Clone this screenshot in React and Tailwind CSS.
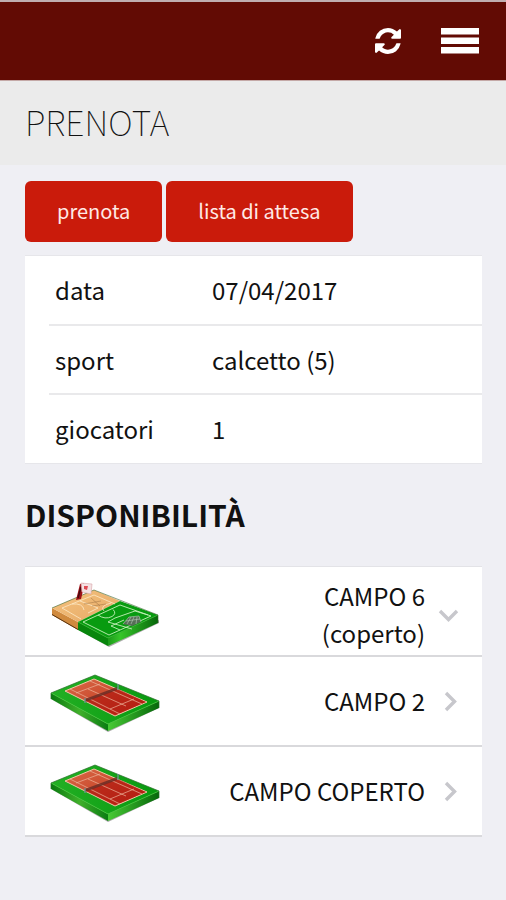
import { useState } from 'react'

const details = [
  { label: 'data', value: '07/04/2017' },
  { label: 'sport', value: 'calcetto (5)' },
  { label: 'giocatori', value: '1' }
]

const fields = [
  { id: 'campo-6', lines: ['CAMPO 6', '(coperto)'], type: 'indoor' },
  { id: 'campo-2', lines: ['CAMPO 2'], type: 'tennis' },
  { id: 'campo-coperto', lines: ['CAMPO COPERTO'], type: 'tennis' }
]

const RefreshIcon = () => (
  <svg className="h-[26px] w-[26px]" viewBox="0 128 1536 1536" fill="#fff" aria-hidden="true">
    <path d="M1511 1056q0 5-1 7-64 268-268 434.500T764 1664q-146 0-282.500-55T238 1452l-129 129q-19 19-45 19t-45-19-19-45v-448q0-26 19-45t45-19h448q26 0 45 19t19 45-19 45l-137 137q71 66 161 102t187 36q134 0 250-65t186-179q11-17 53-117 8-23 30-23h192q13 0 22.500 9.500t9.500 22.500z" />
    <path d="M1536 256v448q0 26-19 45t-45 19h-448q-26 0-45-19t-19-45 19-45l138-138Q969 384 768 384q-134 0-250 65T332 628q-11 17-53 117-8 23-30 23H50q-13 0-22.500-9.500T18 736v-7q65-268 270-434.500T768 128q146 0 284 55.500T1297 340l130-129q19-19 45-19t45 19 19 45z" />
  </svg>
)

const MenuIcon = () => (
  <svg className="h-7 w-10" viewBox="0 0 40 28" fill="#fff" aria-hidden="true">
    <rect x="1" y="1" width="38" height="6.5" />
    <rect x="1" y="10.5" width="38" height="6.5" />
    <rect x="1" y="20" width="38" height="6.5" />
  </svg>
)

const Chevron = ({ open }) => (
  <svg className="h-6 w-6 shrink-0" viewBox="0 0 24 24" fill="none" stroke="#c7c7cc" strokeWidth="3.4" aria-hidden="true">
    {open ? <path d="M2 12l8.500 8.500L19 12" /> : <path d="M8 4l8.500 8.500L8 21" />}
  </svg>
)

const IndoorField = () => (
  <svg className="h-20 w-30 shrink-0" viewBox="5 0 120 80" fill="none" aria-hidden="true">
    <defs>
      <linearGradient id="wood" x1="0" y1="0" x2="1" y2="1">
        <stop offset="0" stopColor="#f5c27e" />
        <stop offset="1" stopColor="#e5a966" />
      </linearGradient>
      <linearGradient id="grass-side" x1="0" y1="0" x2="1" y2="0">
        <stop offset="0" stopColor="#1c9a1a" />
        <stop offset="0.25" stopColor="#36c52a" />
        <stop offset="1" stopColor="#07670a" />
      </linearGradient>
    </defs>
    <path d="M12 44l57 32 50-24v-3L69 72z" fill="#555" opacity="0.5" />
    <path d="M12 37l26 14v8L12 44z" fill="#d08a3e" />
    <path d="M12 43.500l26 15" stroke="#59330f" />
    <path d="M38 51l30 16v8L38 59z" fill="#08860c" />
    <path d="M68 67l50-23v8L68 75z" fill="url(#grass-side)" />
    <path d="M12 37l42-18 26 11-42 21z" fill="url(#wood)" />
    <path d="M80 30l38 14-50 23-30-16z" fill="#089b10" />
    <path d="M38 51l30 16 50-23" stroke="#2fae2a" strokeWidth="0.8" />
    <path d="M12 37l42-18 64 25v8" stroke="#39652d" strokeWidth="0.6" />
    <g stroke="#fff0d2" strokeWidth="0.7">
      <path d="M41 48L22 37l32-13 21 9" />
      <path d="M32 33q11-1 12 6M40 30l18 7-10 5M64 40q-5-5 7-8" />
    </g>
    <path d="M44 33l17-3M51 27l9 8M52 35l14-2" stroke="#8d6136" strokeWidth="0.8" opacity="0.5" />
    <g stroke="#c5efb9" strokeWidth="0.900">
      <path d="M43 51l26 13 42-19-31-11z" />
      <path d="M58 44q7 5 14 1.500 5-3 1-7" />
      <path d="M92 58l-24-7 7-4 20-7 13 4M80 59l-9-4 13-6" />
    </g>
    <path d="M83 53l6-7 10-1 2 6-9 4z" fill="#576e57" />
    <path d="M83 53l6-7 10-1 2 6M87 53l4-7m0 7l3-7m2 7l1-7M86 50l14-2" stroke="#b9cdb9" strokeWidth="0.6" />
    <path d="M36 29l4-16 4-1v4l-3 12z" fill="#9e1017" />
    <path d="M38 27l3-11" stroke="#480a10" strokeWidth="1.500" />
    <path d="M41 12l11 1-1 10-9-2z" fill="#f4e1e3" stroke="#d9a5a8" strokeWidth="0.6" />
    <path d="M44 15l4 0-1 4-3-1z" fill="#df4c54" />
  </svg>
)

const TennisField = () => (
  <svg className="h-20 w-30 shrink-0" viewBox="5 1 120 80" fill="none" aria-hidden="true">
    <defs>
      <linearGradient id="turf" x1="0" y1="0" x2="1" y2="0">
        <stop offset="0" stopColor="#23b024" />
        <stop offset="1" stopColor="#07980f" />
      </linearGradient>
      <linearGradient id="turf-side" x1="0" y1="0" x2="1" y2="0">
        <stop offset="0" stopColor="#48ca35" />
        <stop offset="1" stopColor="#06680a" />
      </linearGradient>
      <linearGradient id="turf-front" x1="0" y1="0" x2="1" y2="0">
        <stop offset="0" stopColor="#0a7a10" />
        <stop offset="0.5" stopColor="#3fb02a" />
        <stop offset="1" stopColor="#0a7c12" />
      </linearGradient>
      <linearGradient id="clay" x1="0" y1="0" x2="1" y2="1">
        <stop offset="0" stopColor="#d96a48" />
        <stop offset="0.5" stopColor="#cb4a2d" />
        <stop offset="1" stopColor="#c02a18" />
      </linearGradient>
    </defs>
    <path d="M11 39l57 33 51-24v-3L68 68z" fill="#555" opacity="0.5" />
    <path d="M11 33l57 31v7L11 39z" fill="url(#turf-front)" />
    <path d="M68 64l51-23v7L68 71z" fill="url(#turf-side)" />
    <path d="M11 33l44-18 64 26-51 23z" fill="url(#turf)" />
    <path d="M11 33l57 31 51-23" stroke="#3fc034" strokeWidth="0.8" />
    <path d="M11 39v-6l44-18 64 26v7" stroke="#286d28" strokeWidth="0.7" />
    <path d="M25 31l29-12 53 23-32 14z" fill="url(#clay)" stroke="#f1c5a8" strokeWidth="1" />
    <path d="M46 41l32-12 28 13-31 13z" fill="#ad120c" opacity="0.6" />
    <g stroke="#edb49c" strokeWidth="0.700">
      <path d="M30 29l50 25M50 21l52 23" />
      <path d="M36 33l24-9M48 29l38 17M70 49l24-10" />
    </g>
    <path d="M45 39l32-12v3L45 42z" fill="#662b24" opacity="0.8" />
    <path d="M45 43v-5M78 30v-6" stroke="#6d9692" strokeWidth="1.300" />
  </svg>
)

const FieldRow = ({ field, open, onToggle }) => (
  <li className="border-b-2 border-[#d9d9dc] bg-white">
    <button
      type="button"
      aria-expanded={open}
      onClick={onToggle}
      className="flex h-[88px] w-full items-center px-5 text-right"
    >
      {field.type === 'indoor' ? <IndoorField /> : <TennisField />}
      <span className={`mr-[13px] flex-1 text-2xl leading-[37px] ${field.lines.length > 1 ? 'pt-1.5' : 'pb-0.5'}`}>
        {field.lines.map(line => (
          <span key={line} className="block">{line}</span>
        ))}
      </span>
      <Chevron open={open} />
    </button>
  </li>
)

const App = () => {
  const [openField, setOpenField] = useState('campo-6')

  return (
    <div className="min-h-screen bg-[#efeff4] font-['Noto_Sans_CJK_SC','Noto_Sans',sans-serif] text-[#111]">
      <header className="flex h-20 items-center justify-end gap-[39px] border-t-2 border-t-[#c1aeb0] bg-[#620b04] pr-[26px]">
        <button type="button" aria-label="Aggiorna">
          <RefreshIcon />
        </button>
        <button type="button" aria-label="Menu">
          <MenuIcon />
        </button>
      </header>

      <div className="flex h-[85px] items-center border-t border-[#c4a9a7] bg-[#ebebeb] px-[25px] pb-0.5">
        <h1 className="text-[34px] leading-10 font-thin">PRENOTA</h1>
      </div>

      <main className="pt-4 pr-6 pl-[25px]">
        <div className="flex gap-1">
          <button type="button" className="h-[61px] rounded-md bg-[#ca1b0b] px-8 pb-0.5 text-xl text-[#ffe9e6]">
            prenota
          </button>
          <button type="button" className="h-[61px] rounded-md bg-[#ca1b0b] px-8 pb-0.5 text-xl text-[#ffe9e6]">
            lista di attesa
          </button>
        </div>

        <div className="mt-[13px] border-y border-[#e6e6ea] bg-white pl-6">
          <table className="w-full text-left text-2xl">
            <tbody className="divide-y-2 divide-[#e9e9eb]">
              {details.map(({ label, value }) => (
                <tr key={label} className="h-[69px]">
                  <th scope="row" className="w-[163px] pl-1.5 font-normal">{label}</th>
                  <td>{value}</td>
                </tr>
              ))}
            </tbody>
          </table>
        </div>

        <h2 className="mt-[30px] text-[30px] leading-10 font-bold">DISPONIBILITÀ</h2>

        <ul className="mt-8 border-t border-[#e3e3e7]">
          {fields.map(field => (
            <FieldRow
              key={field.id}
              field={field}
              open={openField === field.id}
              onToggle={() => setOpenField(openField === field.id ? null : field.id)}
            />
          ))}
        </ul>
      </main>
    </div>
  )
}

export default App
